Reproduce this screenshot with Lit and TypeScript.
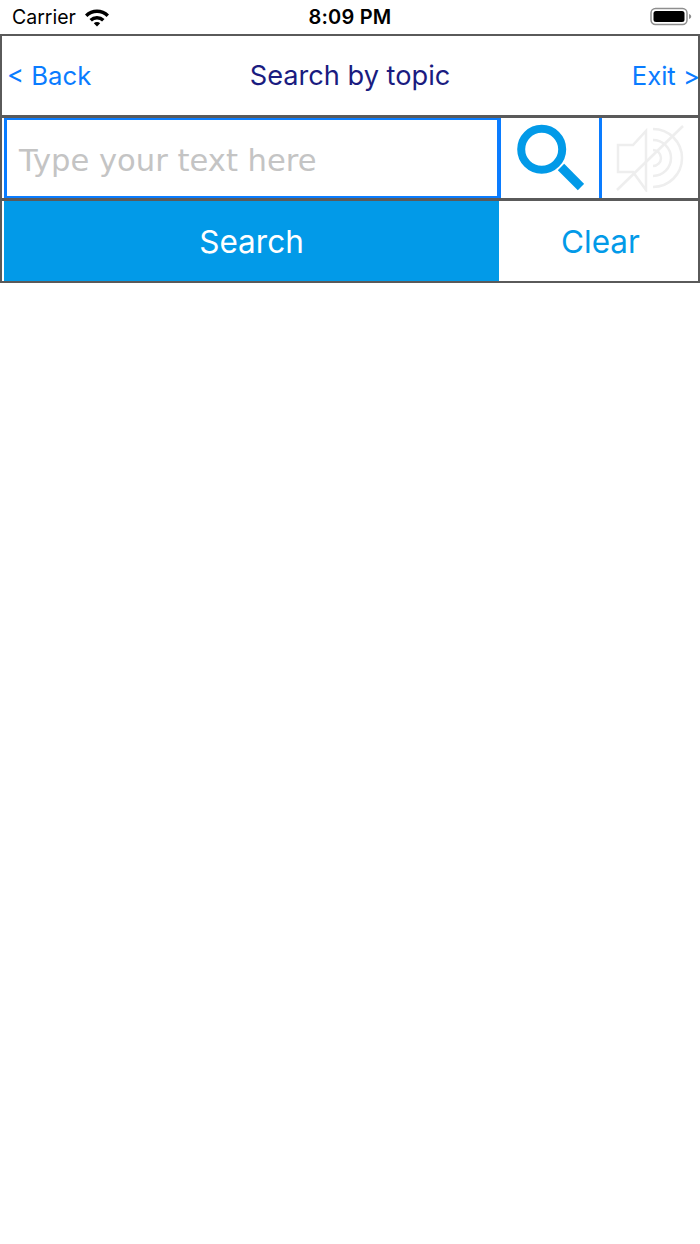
import { LitElement, html, css } from "lit";
import { customElement } from "lit/decorators.js";

@customElement("app-root")
export class AppRoot extends LitElement {
  static styles = css`
    :host {
      display: block;
      width: 700px;
      height: 1244px;
      background: #fff;
      font-family: Inter, "Liberation Sans", sans-serif;
      overflow: hidden;
    }
    .status {
      height: 34px;
      display: grid;
      grid-template-columns: 1fr auto 1fr;
      align-items: center;
      padding: 0 12px;
      font-size: 19.5px;
      color: #000;
    }
    .status-left {
      display: flex;
      align-items: center;
      gap: 8px;
    }
    .status-right {
      display: flex;
      justify-content: flex-end;
      margin-right: -4px;
    }
    .clock {
      font-weight: 600;
      font-size: 20px;
      letter-spacing: 0.2px;
    }
    .nav {
      height: 84px;
      box-sizing: border-box;
      border: 2px solid #5a5a5a;
      border-bottom-width: 3px;
      display: grid;
      grid-template-columns: 1fr auto 1fr;
      align-items: center;
      font-size: 25.7px;
      color: #0a7cff;
    }
    .back {
      margin-left: 5px;
    }
    .exit {
      justify-self: end;
      margin-right: -2px;
    }
    .title {
      color: #1a1c80;
      font-size: 27.2px;
    }
    .input-row {
      height: 83px;
      box-sizing: border-box;
      border-left: 2px solid #5a5a5a;
      border-right: 2px solid #5a5a5a;
      border-bottom: 3px solid #5a5a5a;
      display: flex;
      padding-left: 2px;
    }
    .field {
      width: 497px;
      box-sizing: border-box;
      border: 2px solid #0a7cff;
      border-left-width: 3px;
      border-right-width: 4px;
      padding: 5px 0 0 12px;
      display: flex;
      align-items: center;
      font-family: "DejaVu Sans", sans-serif;
      font-size: 30.6px;
      color: #c4c4c4;
    }
    .icon-btn {
      width: 98px;
      display: flex;
      align-items: center;
      justify-content: center;
    }
    .divider {
      width: 3px;
      background: #0a7cff;
    }
    .mute {
      flex: 1;
      display: flex;
      align-items: center;
      justify-content: center;
    }
    .action-row {
      height: 82px;
      box-sizing: border-box;
      border: 2px solid #5a5a5a;
      border-top: 0;
      display: flex;
      padding-left: 2px;
      font-size: 31.5px;
    }
    .search {
      width: 495px;
      background: #029ae8;
      color: #fff;
      display: flex;
      align-items: center;
      justify-content: center;
    }
    .clear {
      flex: 1;
      color: #029ae8;
      display: flex;
      align-items: center;
      justify-content: center;
      padding-left: 4px;
    }
  `;

  render() {
    return html`
      <div class="status">
        <div class="status-left">
          <span>Carrier</span>
          <svg width="26" height="20" viewBox="0 0 26 20">
            <path d="M1 7.5a17 17 0 0 1 24 0l-2.4 2.5a13.6 13.6 0 0 0-19.2 0z" fill="#000" />
            <path d="M5.5 12a10.7 10.7 0 0 1 15 0l-2.4 2.5a7.3 7.3 0 0 0-10.2 0z" fill="#000" />
            <path d="M9.8 16.3a4.6 4.6 0 0 1 6.4 0L13 19.6z" fill="#000" />
          </svg>
        </div>
        <span class="clock">8:09 PM</span>
        <div class="status-right">
          <svg width="42" height="20" viewBox="0 0 42 20">
            <rect x="1" y="1.5" width="36" height="16" rx="4.5" fill="none" stroke="#8e8e8e" stroke-width="1.5" />
            <rect x="3.5" y="4" width="31" height="11" rx="2.5" fill="#000" />
            <path d="M39 7v5c1.4-.4 2.2-1.4 2.2-2.5S40.4 7.4 39 7z" fill="#8e8e8e" />
          </svg>
        </div>
      </div>
      <div class="nav">
        <span class="back">&lt; Back</span>
        <span class="title">Search by topic</span>
        <span class="exit">Exit &gt;</span>
      </div>
      <div class="input-row">
        <div class="field">Type your text here</div>
        <div class="icon-btn">
          <svg width="68" height="68" viewBox="0 0 68 68">
            <circle cx="25.7" cy="25.3" r="20.5" fill="none" stroke="#029ae8" stroke-width="8" />
            <path d="M45 43l20 20" stroke="#029ae8" stroke-width="9" fill="none" />
          </svg>
        </div>
        <div class="divider"></div>
        <div class="mute">
          <svg width="68" height="68" viewBox="0 0 68 68" fill="none" stroke="#eeeeee" stroke-width="2.5">
            <path d="M2 21h15L30 7v59L17 48H2z" />
            <path d="M1 66L67 2" />
            <path d="M37 26a8 8 0 0 1 0 16" />
            <path d="M37 16a18 18 0 0 1 0 36" />
            <path d="M37 5a29 29 0 0 1 0 58" />
          </svg>
        </div>
      </div>
      <div class="action-row">
        <div class="search">Search</div>
        <div class="clear">Clear</div>
      </div>
    `;
  }
}
